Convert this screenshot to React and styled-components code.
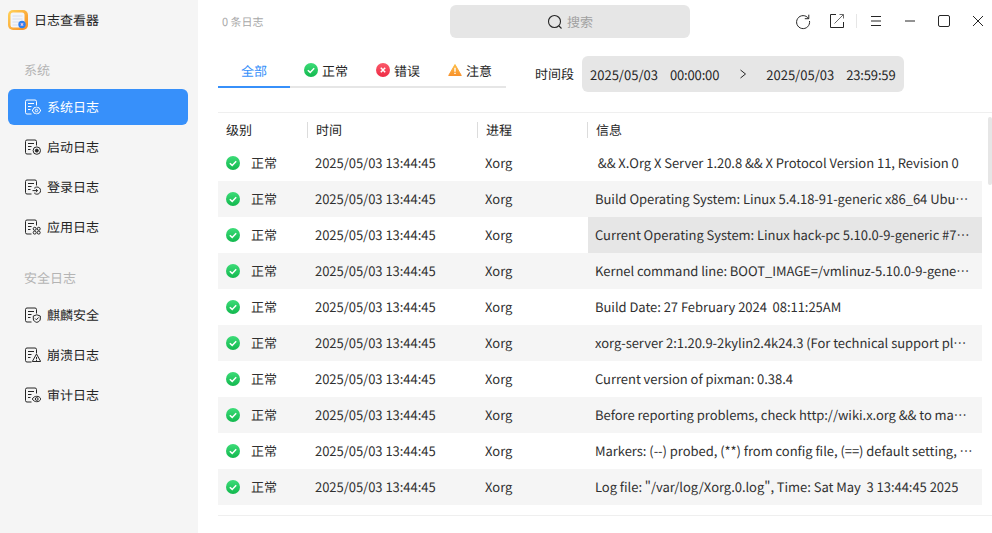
import React from "react";
import styled, { createGlobalStyle } from "styled-components";

const Global = createGlobalStyle`
  html, body { margin: 0; padding: 0; background: #fff; }
  body { font-family: "Noto Sans CJK SC", "Noto Sans", sans-serif; overflow: hidden; text-rendering: geometricPrecision; }
  * { box-sizing: border-box; }
`;

const Window = styled.div`
  width: 992px; height: 533px; display: flex; background: #fff; color: #262626; overflow: hidden; position: relative;
`;
const Sidebar = styled.aside`
  width: 198px; flex: none; background: #f5f5f5; padding: 10px 10px 0 8px; display: flex; flex-direction: column;
`;
const Brand = styled.div`
  height: 20px; display: flex; align-items: center; gap: 6px; font-size: 13px; line-height: 20px; margin-bottom: 30px;
`;
const GroupLabel = styled.div`
  height: 20px; font-size: 13px; line-height: 20px; color: #b4b4b4; padding-left: 16px; margin-bottom: 9px;
  margin-top: ${p => p.$top || 0}px;
`;
const NavItem = styled.div`
  height: 36px; margin-bottom: 4px; border-radius: 6px; display: flex; align-items: center; gap: 6px; padding-left: 17px;
  font-size: 13px; background: ${p => (p.$active ? "#3790fa" : "transparent")}; color: ${p => (p.$active ? "#fff" : "#262626")};
`;
const NavText = styled.span`
  margin-bottom: 2px;
`;
const Main = styled.main`
  flex: 1; min-width: 0; display: flex; flex-direction: column; padding-left: 20px;
`;
const TopBar = styled.div`
  height: 43px; display: flex; align-items: flex-start;
`;
const CountText = styled.div`
  width: 232px; padding: 13px 0 0 4px; font-size: 11px; line-height: 18px; color: #a8a8a8;
`;
const Search = styled.div`
  width: 240px; height: 33px; margin-top: 5px; background: #e6e6e6; border-radius: 6px; display: flex; align-items: center; justify-content: center; gap: 4px;
  font-size: 13px; color: #a0a0a0;
`;
const WinControls = styled.div`
  margin-left: 104px; margin-top: 12px; display: flex; align-items: center; color: #262626;
`;
const CtlIcon = styled.svg`
  width: 18px; height: 18px; flex: none; margin-right: ${p => p.$gap}px; fill: none; stroke: currentColor; stroke-width: 1;
`;
const CtlDivider = styled.div`
  width: 1px; height: 14px; background: #e6e6e6; margin-right: 10px;
`;
const FilterBar = styled.div`
  height: 57px; display: flex; align-items: flex-start; margin-top: 13px;
`;
const Tabs = styled.div`
  width: 288px; height: 32px; display: flex; border-bottom: 2px solid #e6e6e6;
`;
const Tab = styled.div`
  width: 72px; height: 32px; display: flex; align-items: center; justify-content: center; gap: 4px; font-size: 13px; padding-bottom: 2px;
  color: ${p => (p.$active ? "#3790fa" : "#262626")};
  border-bottom: 2px solid ${p => (p.$active ? "#3790fa" : "transparent")};
`;
const RangeLabel = styled.div`
  margin-left: 29px; font-size: 13px; line-height: 36px; width: 47px; flex: none;
`;
const Range = styled.div`
  width: 322px; height: 36px; background: #e6e6e6; border-radius: 6px; display: flex; align-items: center; font-size: 13px; padding-left: 8px; gap: 12px;
`;
const TimeText = styled.span`
  letter-spacing: -0.15px;
`;
const RangeArrow = styled.svg`
  width: 10px; height: 10px; margin: 0 6px 0 7px; flex: none; fill: none; stroke: #262626; stroke-width: 1;
`;
const Table = styled.div`
  border-top: 1px solid #efefef; margin-top: -1px; border-bottom: 1px solid #efefef; height: 404px; padding-right: 10px;
`;
const HeaderRow = styled.div`
  height: 32px; display: grid; grid-template-columns: 89px 170px 110px 1fr; align-items: center; font-size: 13px; padding-top: 2px;
`;
const HeadCell = styled.div`
  height: 16px; line-height: 16px; padding-left: 8px; border-left: ${p => (p.$first ? "0" : "1px solid #dcdcdc")};
`;
const Row = styled.div`
  height: 36px; display: grid; grid-template-columns: 90px 170px 110px 1fr; align-items: stretch; font-size: 13px;
  background: ${p => (p.$alt ? "#f5f5f5" : "#fff")};
`;
const Cell = styled.div`
  display: flex; align-items: center; padding: 0 0 2px 7px; min-width: 0; color: #303030; letter-spacing: -0.04px;
  background: ${p => (p.$hover ? "#e6e6e6" : "transparent")};
`;
const LevelCell = styled.div`
  display: flex; align-items: center; padding-left: 8px; color: #303030;
`;
const LevelText = styled.span`
  margin: 0 0 2px 11px;
`;
const Message = styled.span`
  white-space: pre; overflow: hidden;
`;
const Scrollbar = styled.div`
  position: absolute; right: 0; top: 117px; width: 4px; height: 68px; background: #e6e6e6; border-radius: 2px;
`;

const Status = ({ kind = "ok", size = 14 }) => {
  if (kind === "warn")
    return (
      <svg width={size} height={size} viewBox="0 0 14 14">
        <defs>
          <linearGradient id="gWarn" x1="0" y1="0" x2="0" y2="1">
            <stop offset="0" stopColor="#fdbd45" />
            <stop offset="1" stopColor="#f8932c" />
          </linearGradient>
        </defs>
        <path d="M7 1.500 13.300 12.500H.7Z" fill="url(#gWarn)" stroke="url(#gWarn)" strokeLinejoin="round" />
        <path d="M7 4.800v4M7 9.800v1.200" stroke="#fff" strokeWidth="1.400" />
      </svg>
    );
  const id = kind === "ok" ? "gOk" : "gErr";
  return (
    <svg width={size} height={size} viewBox="0 0 14 14">
      <defs>
        <linearGradient id="gOk" x1="0" y1="0" x2="0" y2="1">
          <stop offset="0" stopColor="#3ddc78" />
          <stop offset="1" stopColor="#12b84e" />
        </linearGradient>
        <linearGradient id="gErr" x1="0" y1="0" x2="0" y2="1">
          <stop offset="0" stopColor="#fb5a6a" />
          <stop offset="1" stopColor="#ee2a45" />
        </linearGradient>
      </defs>
      <circle cx="7" cy="7" r="7" fill={`url(#${id})`} />
      {kind === "ok" ? (
        <path d="M3.800 7.200 6.200 9.400 10.200 5.200" fill="none" stroke="#fff" strokeWidth="1.500" />
      ) : (
        <path d="M4.800 4.800 9.200 9.200M9.200 4.800 4.800 9.200" fill="none" stroke="#fff" strokeWidth="1.500" />
      )}
    </svg>
  );
};

const Badge = ({ kind }) => {
  switch (kind) {
    case "gear":
      return (
        <>
          <path d="M11.500 7.800 12.500 8.800 14 8.700 14.500 10 15.500 11 15.500 12 14.500 13 14 14.300 12.500 14.200 11.500 15.200 10.500 14.200 9 14.300 8.500 13 7.500 12V11L8.500 10 9 8.700 10.500 8.800Z" />
          <circle cx="11.500" cy="11.500" r="1.200" />
        </>
      );
    case "record":
      return <><circle cx="11.800" cy="11.600" r="3.700" /><circle cx="11.800" cy="11.600" r="1.500" fill="currentColor" /></>;
    case "login":
      return <><path d="M9.200 9.300a3.600 3.600 0 1 1 0 4.600" /><path d="M7.500 11.600h5M10.800 9.900l1.800 1.700-1.800 1.700" /></>;
    case "apps":
      return <><circle cx="9.700" cy="9.800" r="1.500" /><circle cx="13.700" cy="9.800" r="1.500" /><circle cx="9.700" cy="13.600" r="1.500" /><circle cx="13.700" cy="13.600" r="1.500" /></>;
    case "shield":
      return <><path d="M11.800 7.800 15.300 9v3c0 1.700-1.500 2.800-3.500 3.400-2-.6-3.500-1.700-3.500-3.400V9Z" /><path d="M10.100 11.500l1.300 1.300 2.100-2.300" /></>;
    case "alert":
      return <><path d="M11.500 7 15.700 14.500H7.300Z" /><path d="M11.500 10v2.300M11.500 13v.9" /></>;
    default:
      return <><path d="M7.300 12c1-1.800 2.600-2.700 4.400-2.700s3.400.9 4.300 2.700c-.9 1.800-2.500 2.700-4.300 2.700S8.300 13.800 7.300 12Z" /><circle cx="11.700" cy="12" r="1.400" /></>;
  }
};

const DocIconSvg = styled.svg`
  width: 16px; height: 16px; flex: none; fill: none; stroke: currentColor; stroke-width: 1;
`;
const DocIcon = ({ kind }) => (
  <DocIconSvg viewBox="0 0 16 16">
    <path d="M6.500 15H2a1.500 1.500 0 0 1-1.500-1.500V2.500A1.500 1.500 0 0 1 2 1h8a1.500 1.500 0 0 1 1.500 1.500V6.500" />
    <path d="M3 4.500h6M3 7.500h3.500M3 10.500h2.500" />
    <Badge kind={kind} />
  </DocIconSvg>
);

const AppLogo = () => (
  <svg width="20" height="20" viewBox="0 0 20 20">
    <defs>
      <linearGradient id="logoG" x1="0" y1="0" x2="1" y2="1">
        <stop offset="0" stopColor="#ffd45c" />
        <stop offset="1" stopColor="#f98d22" />
      </linearGradient>
    </defs>
    <rect width="20" height="20" rx="5" fill="url(#logoG)" />
    <rect x="2.500" y="2.500" width="14" height="15" rx="2.500" fill="#f3f5fa" />
    <path d="M4.500 6h10M4.500 9h10M4.500 12h7M4.500 15h5" stroke="#d8deea" />
    <circle cx="14" cy="14.500" r="3.700" fill="#2f7ff0" />
    <path d="M12.800 13.300l2.400 2.400M15.200 13.300l-2.400 2.400" stroke="#f8c8dc" strokeWidth="1.100" />
  </svg>
);

const rows = [
  " && X.Org X Server 1.20.8 && X Protocol Version 11, Revision 0",
  "Build Operating System: Linux 5.4.18-91-generic x86_64 Ubu\u2026",
  "Current Operating System: Linux hack-pc 5.10.0-9-generic #7\u2026",
  "Kernel command line: BOOT_IMAGE=/vmlinuz-5.10.0-9-gene\u2026",
  "Build Date: 27 February 2024  08:11:25AM",
  "xorg-server 2:1.20.9-2kylin2.4k24.3 (For technical support pl\u2026",
  "Current version of pixman: 0.38.4",
  "Before reporting problems, check http://wiki.x.org && to ma\u2026",
  "Markers: (--) probed, (**) from config file, (==) default setting, \u2026",
  "Log file: \"/var/log/Xorg.0.log\", Time: Sat May  3 13:44:45 2025",
];

const nav1 = [["系统日志", "gear", true], ["启动日志", "record"], ["登录日志", "login"], ["应用日志", "apps"]];
const nav2 = [["麒麟安全", "shield"], ["崩溃日志", "alert"], ["审计日志", "eye"]];

export default function App() {
  return (
    <Window lang="zh-CN">
      <Global />
      <Sidebar>
        <Brand><AppLogo /><span>日志查看器</span></Brand>
        <GroupLabel>系统</GroupLabel>
        {nav1.map(([t, k, a]) => (
          <NavItem key={t} $active={a}><DocIcon kind={k} /><NavText>{t}</NavText></NavItem>
        ))}
        <GroupLabel $top={19}>安全日志</GroupLabel>
        {nav2.map(([t, k]) => (
          <NavItem key={t}><DocIcon kind={k} /><NavText>{t}</NavText></NavItem>
        ))}
      </Sidebar>
      <Main>
        <TopBar>
          <CountText>0 条日志</CountText>
          <Search>
            <svg width="16" height="16" viewBox="0 0 16 16" fill="none" stroke="#262626" strokeWidth="1.100">
              <circle cx="7.500" cy="7.500" r="6" /><path d="M12 12l2.500 2.500" />
            </svg>
            <span>搜索</span>
          </Search>
          <WinControls>
            <CtlIcon $gap={16} viewBox="0 0 18 18"><path d="M14.500 6.500A6.500 6.500 0 1 0 15.500 9M14.800 2.700v4h-4" /></CtlIcon>
            <CtlIcon $gap={10} viewBox="0 0 18 18"><path d="M8 2.500H2.500v13h13V10" /><path d="M6.500 11.500l9-9M11.500 2.500h4v4" stroke="#6a6a6a" /></CtlIcon>
            <CtlDivider />
            <CtlIcon $gap={16} viewBox="0 0 18 18"><path d="M4 4.500h10M4 9h10M4 13.500h10" /></CtlIcon>
            <CtlIcon $gap={16} viewBox="0 0 18 18"><path d="M4 9h10" /></CtlIcon>
            <CtlIcon $gap={16} viewBox="0 0 18 18"><rect x="3.500" y="3.500" width="11" height="11" rx="1.500" /></CtlIcon>
            <CtlIcon $gap={0} viewBox="0 0 18 18"><path d="M4 4l10 10M14 4 4 14" /></CtlIcon>
          </WinControls>
        </TopBar>
        <FilterBar>
          <Tabs>
            <Tab $active>全部</Tab>
            <Tab><Status kind="ok" />正常</Tab>
            <Tab><Status kind="err" />错误</Tab>
            <Tab><Status kind="warn" />注意</Tab>
          </Tabs>
          <RangeLabel>时间段</RangeLabel>
          <Range>
            <span>2025/05/03</span>
            <TimeText>00:00:00</TimeText>
            <RangeArrow viewBox="0 0 10 10"><path d="M2.500 1l5 4-5 4" /></RangeArrow>
            <span>2025/05/03</span>
            <TimeText>23:59:59</TimeText>
          </Range>
        </FilterBar>
        <Table>
          <HeaderRow>
            <HeadCell $first>级别</HeadCell>
            <HeadCell>时间</HeadCell>
            <HeadCell>进程</HeadCell>
            <HeadCell>信息</HeadCell>
          </HeaderRow>
          {rows.map((m, i) => (
            <Row key={i} $alt={i % 2 === 1}>
              <LevelCell><Status kind="ok" /><LevelText>正常</LevelText></LevelCell>
              <Cell>2025/05/03 13:44:45</Cell>
              <Cell>Xorg</Cell>
              <Cell $hover={i === 2}><Message>{m}</Message></Cell>
            </Row>
          ))}
        </Table>
      </Main>
      <Scrollbar />
    </Window>
  );
}
